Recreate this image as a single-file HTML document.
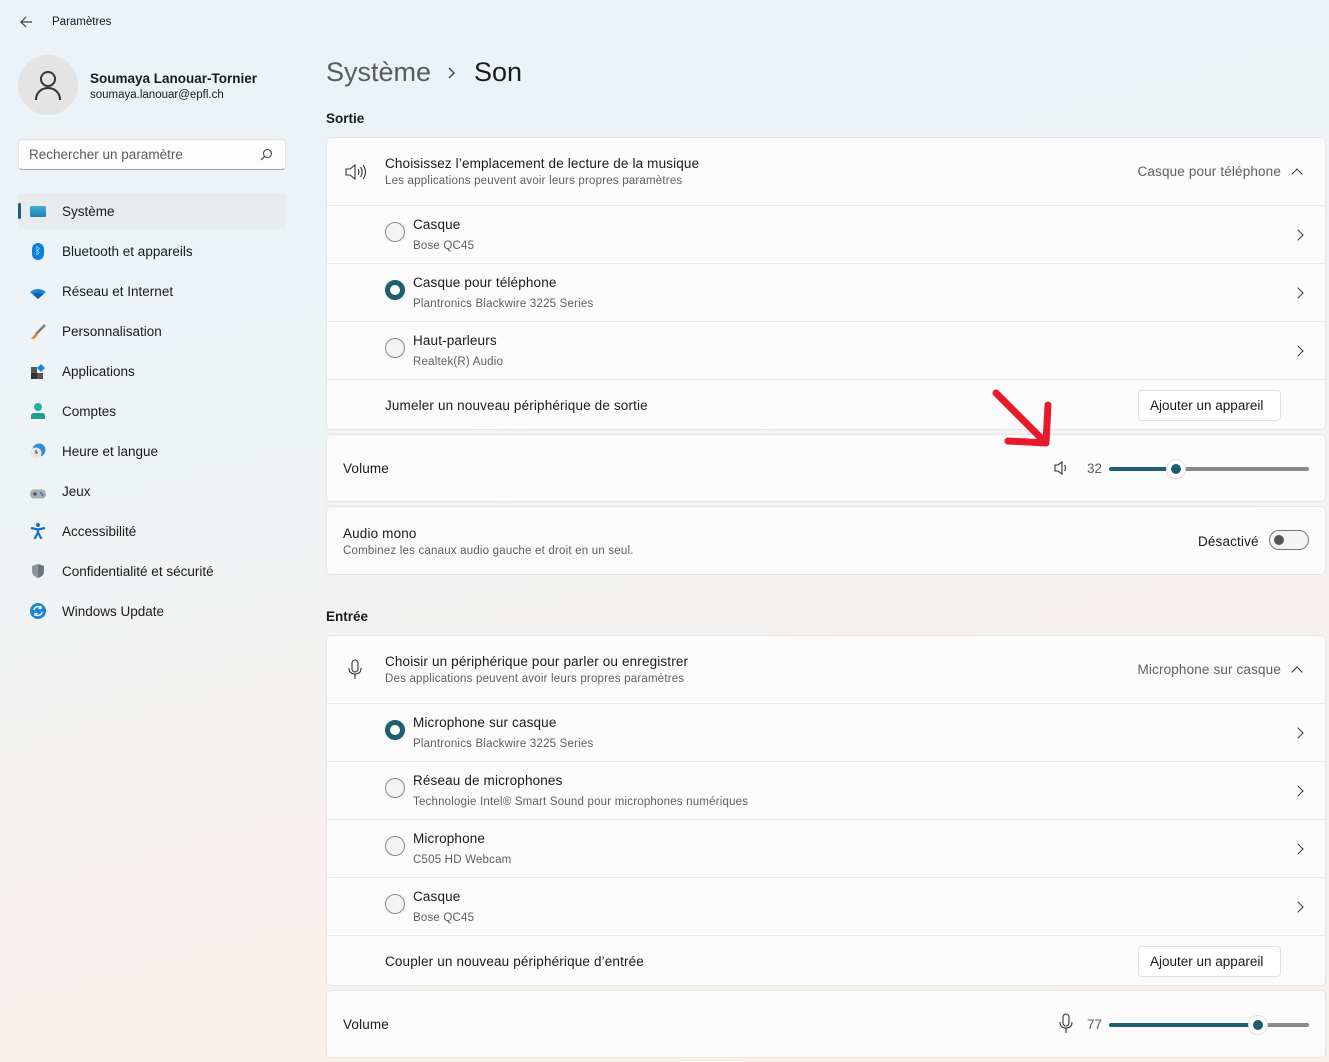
<!DOCTYPE html>
<html><head><meta charset="utf-8">
<style>
*{box-sizing:border-box;margin:0;padding:0}
body{width:1329px;height:1062px;overflow:hidden;position:relative;font-family:"Liberation Sans",sans-serif;color:#1b1b1b;
background:linear-gradient(165deg,#eaf3f7 0%,#eef3f5 35%,#f6f1ee 65%,#f8f1ea 100%);}
.a{position:absolute}
.t{font-size:13.5px;color:#1b1b1b;white-space:nowrap;letter-spacing:0.15px}
.s{font-size:11.5px;color:#5f5f5f;white-space:nowrap;letter-spacing:0.2px}
.card{position:absolute;left:326px;width:1000px;background:#fbfbfb;border:1px solid #e6e6e6;border-radius:5px}
.row{position:absolute;left:0;right:0;border-top:1px solid #ebebeb}
.radio{position:absolute;left:58px;width:20px;height:20px;border-radius:50%;border:1px solid #8a8a8a;background:#f3f3f3}
.radio.on{border:5px solid #1d5f6f;background:#fff}
.chev{position:absolute;right:23px;width:8px;height:8px;border-right:1.3px solid #333;border-top:1.3px solid #333;transform:rotate(45deg)}
.up{position:absolute;right:24px;width:8px;height:8px;border-left:1.3px solid #333;border-top:1.3px solid #333;transform:rotate(45deg)}
.btn{position:absolute;right:44px;height:31px;padding:0 11px;width:143px;line-height:29px;border:1px solid #e0e0e0;border-radius:4px;background:#fff;font-size:13.5px;white-space:nowrap}
.nav{position:absolute;left:62px;font-size:13.5px;color:#1b1b1b}
.ic{position:absolute;left:30px;width:16px;height:16px}
</style></head><body>
<svg class="a" style="left:19px;top:15px" width="14" height="14" viewBox="0 0 14 14"><path d="M13 7H2M7 2L2 7l5 5" fill="none" stroke="#444" stroke-width="1.2"/></svg>
<div class="a" style="left:52px;top:16px;font-size:11.5px">Paramètres</div>
<div class="a" style="left:18px;top:55px;width:60px;height:60px;border-radius:50%;background:#e4e4e4"></div>
<svg class="a" style="left:34px;top:69px" width="28" height="32" viewBox="0 0 28 32"><circle cx="14" cy="10" r="7" fill="none" stroke="#333" stroke-width="2"/><path d="M2 31c0-7 5-12 12-12s12 5 12 12" fill="none" stroke="#333" stroke-width="2"/></svg>
<div class="a" style="left:90px;top:71px;font-size:13.5px;font-weight:bold">Soumaya Lanouar-Tornier</div>
<div class="a" style="left:90px;top:89px;font-size:11.5px">soumaya.lanouar@epfl.ch</div>
<div class="a" style="left:18px;top:139px;width:268px;height:31px;background:#fdfdfd;border:1px solid #e2e2e2;border-bottom-color:#a0a0a0;border-radius:4px"></div>
<div class="a" style="left:29px;top:147px;font-size:13.5px;color:#5d5d5d">Rechercher un paramètre</div>
<svg class="a" style="left:260px;top:148px" width="13" height="13" viewBox="0 0 13 13"><circle cx="7.5" cy="5.5" r="4" fill="none" stroke="#444" stroke-width="1.1"/><path d="M4.5 8.5L1 12" stroke="#444" stroke-width="1.2"/></svg>
<div class="a" style="left:18px;top:193px;width:268px;height:36px;background:#e7ebee;border-radius:4px"></div>
<div class="a" style="left:18px;top:203px;width:3px;height:16px;background:#1d5f6f;border-radius:2px"></div>
<div class="a" style="left:30px;top:206px;width:16px;height:11px;background:linear-gradient(#3fb0d6,#1a7fb0);border-radius:1px"></div>
<div class="nav" style="top:204px">Système</div>
<div class="ic" style="top:243px;left:32px;width:12px;height:17px;background:#0d7fe0;border-radius:6px;color:#fff;font-size:10px;text-align:center;line-height:17px">ᛒ</div>
<div class="nav" style="top:244px">Bluetooth et appareils</div>
<svg class="ic" style="top:286px" viewBox="0 0 16 10" height="10"><path d="M0 3Q8-3 16 3L8 10z" fill="#1a86d9"/><path d="M3 5.5Q8 1.5 13 5.5L8 10z" fill="#0f5fb0"/></svg>
<div class="nav" style="top:284px">Réseau et Internet</div>
<svg class="ic" style="top:324px" viewBox="0 0 16 16"><path d="M15 1L6 10" stroke="#7a7a7a" stroke-width="2.5"/><path d="M6 9l2 2-4 4H1z" fill="#f07c2c"/></svg>
<div class="nav" style="top:324px">Personnalisation</div>
<svg class="ic" style="top:364px" viewBox="0 0 16 16"><rect x="1" y="3" width="6" height="6" fill="#555"/><rect x="1" y="9" width="6" height="6" fill="#333"/><rect x="7" y="9" width="6" height="6" fill="#555"/><path d="M11 0l4 4-4 4-4-4z" fill="#1a86d9"/></svg>
<div class="nav" style="top:364px">Applications</div>
<svg class="ic" style="top:403px" viewBox="0 0 16 16"><circle cx="8" cy="4" r="4" fill="#1fb39a"/><path d="M1 16v-3q0-3 3-3h8q3 0 3 3v3z" fill="#1fa08a"/></svg>
<div class="nav" style="top:404px">Comptes</div>
<svg class="ic" style="top:443px" viewBox="0 0 16 16"><circle cx="9" cy="7" r="6.5" fill="#2d8fd8"/><circle cx="6" cy="10" r="5.5" fill="#e6e6e6"/><path d="M6 7v3h2" stroke="#333" fill="none"/></svg>
<div class="nav" style="top:444px">Heure et langue</div>
<svg class="ic" style="top:486px" viewBox="0 0 16 9"><rect x="0" y="0" width="16" height="9" rx="4" fill="#a8aeb4"/><path d="M3 4.5h4M5 2.5v4" stroke="#333"/><circle cx="11" cy="3.5" r="1" fill="#1a6fd0"/><circle cx="12.5" cy="5.5" r="1" fill="#1a6fd0"/></svg>
<div class="nav" style="top:484px">Jeux</div>
<svg class="ic" style="top:523px" viewBox="0 0 16 16"><circle cx="8" cy="2" r="2" fill="#1470c9"/><path d="M1 5l7 1.5 7-1.5M8 6.5v3M8 9.5L4.5 16M8 9.5l3.5 6.5" stroke="#1470c9" stroke-width="2.2" fill="none"/></svg>
<div class="nav" style="top:524px">Accessibilité</div>
<svg class="ic" style="top:563px" viewBox="0 0 16 16"><path d="M8 1l6 2v5q0 5-6 7-6-2-6-7V3z" fill="#8d959c"/><path d="M8 1l6 2v5q0 5-6 7z" fill="#6d757c"/></svg>
<div class="nav" style="top:564px">Confidentialité et sécurité</div>
<svg class="ic" style="top:603px" viewBox="0 0 16 16"><circle cx="8" cy="8" r="8" fill="#1a86d9"/><path d="M4 7a4 4 0 017-2M12 9a4 4 0 01-7 2" stroke="#fff" stroke-width="1.4" fill="none"/><path d="M11 3v2.5H8.5M5 13v-2.5h2.5" stroke="#fff" stroke-width="1.2" fill="none"/></svg>
<div class="nav" style="top:604px">Windows Update</div>

<div class="a" style="left:326px;top:57px;font-size:27px;color:#5b5b5b">Système</div>
<svg class="a" style="left:448px;top:67px" width="8" height="12" viewBox="0 0 8 12"><path d="M1 1l5 5-5 5" fill="none" stroke="#444" stroke-width="1.4"/></svg>
<div class="a" style="left:474px;top:57px;font-size:27px;color:#1b1b1b">Son</div>
<div class="a" style="left:326px;top:111px;font-size:13.5px;font-weight:bold">Sortie</div>

<div class="card" style="top:137px;height:293px">
  <svg class="a" style="left:18px;top:26px" width="22" height="16" viewBox="0 0 22 16"><path d="M1 5h4l5-4v14l-5-4H1z" fill="none" stroke="#333" stroke-width="1.1"/><path d="M13 5q2 3 0 6M15.5 3q3.5 5 0 10M18 1q5 7 0 14" fill="none" stroke="#333" stroke-width="1.1"/></svg>
  <div class="a t" style="left:58px;top:18px">Choisissez l’emplacement de lecture de la musique</div>
  <div class="a s" style="left:58px;top:37px">Les applications peuvent avoir leurs propres paramètres</div>
  <div class="a" style="right:44px;top:26px;font-size:13.5px;color:#5f5f5f;letter-spacing:0.15px">Casque pour téléphone</div>
  <div class="up" style="top:32px"></div>
  <div class="row" style="top:67px;height:58px"><div class="radio" style="top:16px"></div><div class="a t" style="left:86px;top:11px">Casque</div><div class="a s" style="left:86px;top:34px">Bose QC45</div><div class="chev" style="top:25px"></div></div>
  <div class="row" style="top:125px;height:58px"><div class="radio on" style="top:16px"></div><div class="a t" style="left:86px;top:11px">Casque pour téléphone</div><div class="a s" style="left:86px;top:34px">Plantronics Blackwire 3225 Series</div><div class="chev" style="top:25px"></div></div>
  <div class="row" style="top:183px;height:58px"><div class="radio" style="top:16px"></div><div class="a t" style="left:86px;top:11px">Haut-parleurs</div><div class="a s" style="left:86px;top:34px">Realtek(R) Audio</div><div class="chev" style="top:25px"></div></div>
  <div class="row" style="top:241px;height:51px"><div class="a t" style="left:58px;top:18px">Jumeler un nouveau périphérique de sortie</div><div class="btn" style="top:10px">Ajouter un appareil</div></div>
</div>

<div class="card" style="top:434px;height:68px">
  <div class="a t" style="left:16px;top:26px">Volume</div>
  <svg class="a" style="left:727px;top:26px" width="16" height="14" viewBox="0 0 16 14"><path d="M1 4h3l4-3v12l-4-3H1z" fill="none" stroke="#333" stroke-width="1.1"/><path d="M10.5 4q2 3 0 6" fill="none" stroke="#333" stroke-width="1.1"/></svg>
  <div class="a" style="left:760px;top:26px;font-size:13.5px;color:#5f5f5f">32</div>
  <div class="a" style="left:782px;top:32px;width:68px;height:4px;background:#1d5f6f;border-radius:2px"></div>
  <div class="a" style="left:850px;top:32px;width:132px;height:4px;background:#8a8a8a;border-radius:2px"></div>
  <div class="a" style="left:839px;top:24px;width:20px;height:20px;border-radius:50%;background:#fff;border:1px solid #e0e0e0"></div>
  <div class="a" style="left:844px;top:29px;width:10px;height:10px;border-radius:50%;background:#1d5f6f"></div>
</div>
<svg class="a" style="left:990px;top:385px" width="65" height="70" viewBox="0 0 65 70"><path d="M6 8L56 58M58 20L56 58L18 56" fill="none" stroke="#e8192c" stroke-width="7" stroke-linecap="round" stroke-linejoin="round"/></svg>

<div class="card" style="top:506px;height:69px">
  <div class="a t" style="left:16px;top:19px">Audio mono</div>
  <div class="a s" style="left:16px;top:38px">Combinez les canaux audio gauche et droit en un seul.</div>
  <div class="a t" style="left:871px;top:27px">Désactivé</div>
  <div class="a" style="left:942px;top:23px;width:40px;height:20px;border-radius:10px;border:1px solid #777;background:#f3f3f3"></div>
  <div class="a" style="left:947px;top:28px;width:10px;height:10px;border-radius:50%;background:#555"></div>
</div>

<div class="a" style="left:326px;top:609px;font-size:13.5px;font-weight:bold">Entrée</div>

<div class="card" style="top:635px;height:351px">
  <svg class="a" style="left:20px;top:23px" width="16" height="22" viewBox="0 0 16 22"><rect x="5" y="1" width="6" height="12" rx="3" fill="none" stroke="#333" stroke-width="1.1"/><path d="M2 9q0 6 6 6t6-6M8 15v5" fill="none" stroke="#333" stroke-width="1.1"/></svg>
  <div class="a t" style="left:58px;top:18px">Choisir un périphérique pour parler ou enregistrer</div>
  <div class="a s" style="left:58px;top:37px">Des applications peuvent avoir leurs propres paramètres</div>
  <div class="a" style="right:44px;top:26px;font-size:13.5px;color:#5f5f5f;letter-spacing:0.15px">Microphone sur casque</div>
  <div class="up" style="top:32px"></div>
  <div class="row" style="top:67px;height:58px"><div class="radio on" style="top:16px"></div><div class="a t" style="left:86px;top:11px">Microphone sur casque</div><div class="a s" style="left:86px;top:34px">Plantronics Blackwire 3225 Series</div><div class="chev" style="top:25px"></div></div>
  <div class="row" style="top:125px;height:58px"><div class="radio" style="top:16px"></div><div class="a t" style="left:86px;top:11px">Réseau de microphones</div><div class="a s" style="left:86px;top:34px">Technologie Intel® Smart Sound pour microphones numériques</div><div class="chev" style="top:25px"></div></div>
  <div class="row" style="top:183px;height:58px"><div class="radio" style="top:16px"></div><div class="a t" style="left:86px;top:11px">Microphone</div><div class="a s" style="left:86px;top:34px">C505 HD Webcam</div><div class="chev" style="top:25px"></div></div>
  <div class="row" style="top:241px;height:58px"><div class="radio" style="top:16px"></div><div class="a t" style="left:86px;top:11px">Casque</div><div class="a s" style="left:86px;top:34px">Bose QC45</div><div class="chev" style="top:25px"></div></div>
  <div class="row" style="top:299px;height:51px"><div class="a t" style="left:58px;top:18px">Coupler un nouveau périphérique d’entrée</div><div class="btn" style="top:10px">Ajouter un appareil</div></div>
</div>

<div class="card" style="top:990px;height:68px">
  <div class="a t" style="left:16px;top:26px">Volume</div>
  <svg class="a" style="left:731px;top:22px" width="16" height="22" viewBox="0 0 16 22"><rect x="5" y="1" width="6" height="12" rx="3" fill="none" stroke="#333" stroke-width="1.1"/><path d="M2 9q0 6 6 6t6-6M8 15v5" fill="none" stroke="#333" stroke-width="1.1"/></svg>
  <div class="a" style="left:760px;top:26px;font-size:13.5px;color:#5f5f5f">77</div>
  <div class="a" style="left:782px;top:32px;width:150px;height:4px;background:#1d5f6f;border-radius:2px"></div>
  <div class="a" style="left:932px;top:32px;width:50px;height:4px;background:#8a8a8a;border-radius:2px"></div>
  <div class="a" style="left:921px;top:24px;width:20px;height:20px;border-radius:50%;background:#fff;border:1px solid #e0e0e0"></div>
  <div class="a" style="left:926px;top:29px;width:10px;height:10px;border-radius:50%;background:#1d5f6f"></div>
</div>
</body></html>
